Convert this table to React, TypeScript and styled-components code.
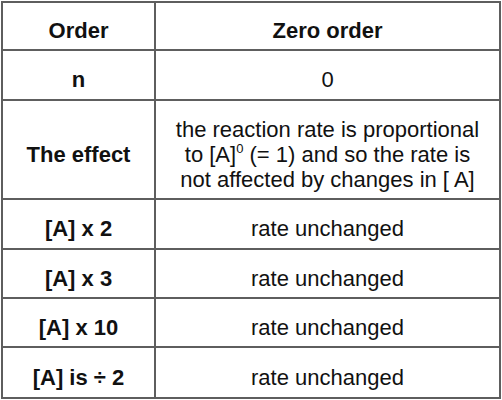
import React from "react";
import styled, { createGlobalStyle } from "styled-components";

const Global = createGlobalStyle`
  html, body { margin: 0; padding: 0; background: #ffffff; }
  body { font-family: "Liberation Sans", Arial, sans-serif; }
`;

const Page = styled.div`
  padding: 1px 0 0 1px;
`;

const Table = styled.div`
  display: grid;
  grid-template-columns: 151px 343px;
  grid-template-rows: 46px 48px 97px 48px 47px 47px 49px;
  gap: 2px;
  width: 496px;
  border: 2px solid #5e5e5e;
  background: #5e5e5e;
`;

const Cell = styled.div<{ $bold?: boolean }>`
  background: #ffffff;
  display: flex;
  align-items: center;
  justify-content: center;
  box-sizing: border-box;
  padding-top: 9px;
  text-align: center;
  color: #111111;
  font-size: 22px;
  line-height: 25px;
  font-weight: ${(p) => (p.$bold ? 700 : 400)};
`;

const Sup = styled.sup`
  font-size: 13px;
  line-height: 0;
  vertical-align: 9px;
`;

const rows: [string, string][] = [
  ["[A] x 2", "rate unchanged"],
  ["[A] x 3", "rate unchanged"],
  ["[A] x 10", "rate unchanged"],
  ["[A] is ÷ 2", "rate unchanged"],
];

export default function App() {
  return (
    <>
      <Global />
      <Page>
        <Table>
          <Cell $bold>Order</Cell>
          <Cell $bold>Zero order</Cell>
          <Cell $bold>n</Cell>
          <Cell>0</Cell>
          <Cell $bold>The effect</Cell>
          <Cell>
            <span>
              the reaction rate is proportional
              <br />
              to [A]<Sup>0</Sup> (= 1) and so the rate is
              <br />
              not affected by changes in [ A]
            </span>
          </Cell>
          {rows.map(([a, b]) => (
            <React.Fragment key={a}>
              <Cell $bold>{a}</Cell>
              <Cell>{b}</Cell>
            </React.Fragment>
          ))}
        </Table>
      </Page>
    </>
  );
}
